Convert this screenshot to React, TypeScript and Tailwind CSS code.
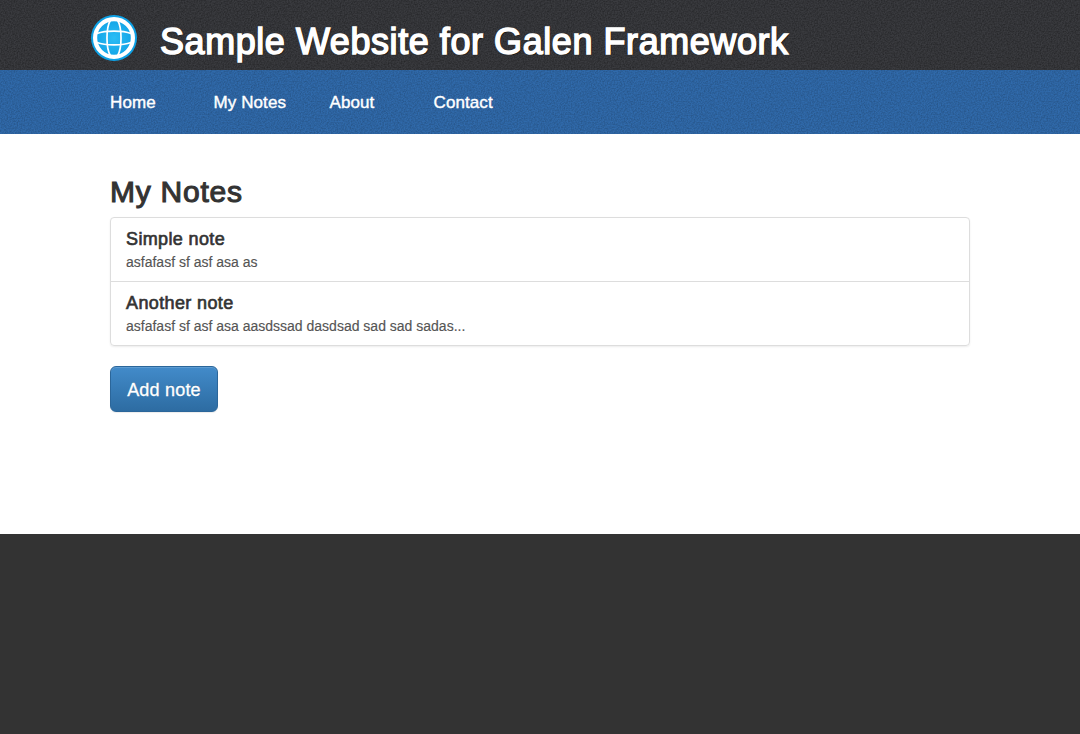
function Noise({ id, strength }: { id: string; strength: number }) {
  return (
    <svg className="pointer-events-none absolute inset-0 h-full w-full" aria-hidden="true">
      <filter id={id} x="0" y="0" width="100%" height="100%" colorInterpolationFilters="sRGB">
        <feTurbulence type="fractalNoise" baseFrequency="0.7" numOctaves="2" stitchTiles="stitch" />
        <feColorMatrix
          type="matrix"
          values={`0 0 0 0 0  0 0 0 0 0  0 0 0 0 0  ${strength} 0 0 0 ${-strength * 0.3}`}
        />
      </filter>
      <rect width="100%" height="100%" filter={`url(#${id})`} />
    </svg>
  );
}

function Globe() {
  return (
    <svg className="h-[48px] w-[48px]" viewBox="0 0 48 48" fill="none">
      <defs>
        <radialGradient id="globe-fill">
          <stop offset="0" stopColor="#2cbdf5" />
          <stop offset="1" stopColor="#0c9fe4" />
        </radialGradient>
      </defs>
      <circle cx="24" cy="24" r="23" fill="url(#globe-fill)" />
      <circle cx="24" cy="24" r="18.9" stroke="#fff" strokeWidth="4.2" />
      <g stroke="#fff" strokeWidth="1.7">
        <path d="M20.500 6C15.800 14 15.800 34 20.500 42M27.500 6C32.200 14 32.200 34 27.500 42" />
        <path d="M7 19.500C15 16.300 33 16.300 41 19.500M7 28.500C15 31.700 33 31.700 41 28.500" />
      </g>
    </svg>
  );
}

const notes = [
  { title: "Simple note", text: "asfafasf sf asf asa as" },
  { title: "Another note", text: "asfafasf sf asf asa aasdssad dasdsad sad sad sadas..." },
];

export default function App() {
  return (
    <div className="flex min-h-[734px] flex-col bg-[#333333] font-['Liberation_Sans',Arial,sans-serif] text-[14px] text-[#333333]">
      <header className="relative h-[70px] bg-[#3a3b3f]">
        <Noise id="header-noise" strength={0.6} />
        <div className="relative flex pl-[90px] pt-[14px]">
          <Globe />
          <h1 className="ml-[22px] mt-[8px] whitespace-nowrap text-[36px] font-normal leading-[40px] tracking-[0.56px] text-white [-webkit-text-stroke:1.5px_white] [text-shadow:1px_1px_1px_#000]">
            <span>Sample Website for Galen Framework</span>
          </h1>
        </div>
      </header>
      <nav className="relative h-[64px] bg-[#306aab]">
        <Noise id="nav-noise" strength={0.35} />
        <ul className="relative flex pl-[110px] pt-[23px] text-[17px] leading-[20px] tracking-[0.1px] text-white [-webkit-text-stroke:0.4px_white]">
          <li className="w-[103.500px]"><a>Home</a></li>
          <li className="w-[116px]"><a>My Notes</a></li>
          <li className="w-[104px]"><a>About</a></li>
          <li><a>Contact</a></li>
        </ul>
      </nav>
      <main className="h-[400px] bg-white px-[110px] pt-[41px]">
        <h2 className="h-[42px] text-[30px] leading-[33px] tracking-[0.75px] [-webkit-text-stroke:1.1px_#333]"><span>My Notes</span></h2>
        <div className="rounded-[4px] border border-[#dddddd] shadow-[0_1px_2px_rgba(0,0,0,0.075)]">
          {notes.map((note) => (
            <a key={note.title} className="block h-[64px] border-b border-[#dddddd] px-[15px] pt-[11px] last:h-[63px] last:border-b-0">
              <h4 className="text-[18px] leading-[20px] tracking-[0.37px] [-webkit-text-stroke:0.65px_#333]"><span>{note.title}</span></h4>
              <p className="mt-[4px] text-[14px] leading-[18px] text-[#555555] [-webkit-text-stroke:0.15px_#555]"><span>{note.text}</span></p>
            </a>
          ))}
        </div>
        <button className="mt-[20px] h-[46px] w-[108px] rounded-[6px] border border-[#2b669a] bg-linear-to-b from-[#428bca] to-[#2d6ca2] pt-[2px] text-[18px] leading-[24px] tracking-[0.2px] text-white shadow-[inset_0_1px_0_rgba(255,255,255,0.15),0_1px_1px_rgba(0,0,0,0.075)] [-webkit-text-stroke:0.3px_white] [text-shadow:0_-1px_0_rgba(0,0,0,0.2)]">
          Add note
        </button>
      </main>
    </div>
  );
}
